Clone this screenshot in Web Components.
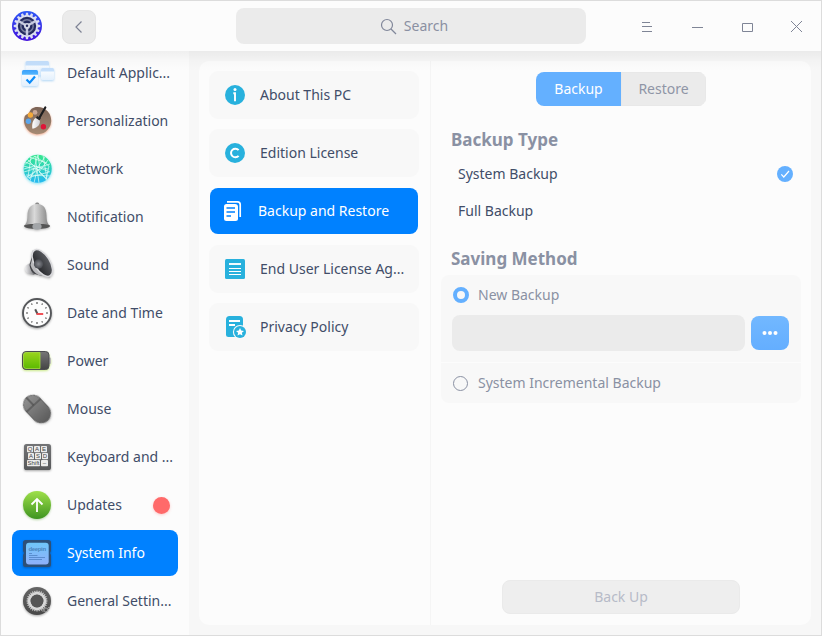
<!DOCTYPE html>
<html lang="en"><head><meta charset="utf-8"><title>Control Center</title>
<style>
html,body{margin:0;height:100%;background:#fcfcfc}
body{font:14px/20px "Noto Sans","Liberation Sans",sans-serif;color:#414d68;overflow:hidden}
</style></head><body>
<cc-window>
  <cc-titlebar slot="bar">Search</cc-titlebar>
  <cc-nav slot="nav">
    <cc-nav-item icon="apps">Default Applic...</cc-nav-item>
    <cc-nav-item icon="palette">Personalization</cc-nav-item>
    <cc-nav-item icon="network">Network</cc-nav-item>
    <cc-nav-item icon="bell">Notification</cc-nav-item>
    <cc-nav-item icon="sound">Sound</cc-nav-item>
    <cc-nav-item icon="clock">Date and Time</cc-nav-item>
    <cc-nav-item icon="power">Power</cc-nav-item>
    <cc-nav-item icon="mouse">Mouse</cc-nav-item>
    <cc-nav-item icon="keyboard">Keyboard and ...</cc-nav-item>
    <cc-nav-item icon="updates" badge>Updates</cc-nav-item>
    <cc-nav-item icon="system" active>System Info</cc-nav-item>
    <cc-nav-item icon="general">General Settin...</cc-nav-item>
  </cc-nav>
  <cc-list slot="list">
    <cc-list-item icon="info">About This PC</cc-list-item>
    <cc-list-item icon="edition">Edition License</cc-list-item>
    <cc-list-item icon="backup" active>Backup and Restore</cc-list-item>
    <cc-list-item icon="eula">End User License Ag...</cc-list-item>
    <cc-list-item icon="privacy">Privacy Policy</cc-list-item>
  </cc-list>
  <cc-backup slot="page">
    <cc-segmented slot="tabs"><span slot="on">Backup</span><span slot="off">Restore</span></cc-segmented>
    <cc-heading slot="type">Backup Type</cc-heading>
    <cc-choice slot="type" checked>System Backup</cc-choice>
    <cc-choice slot="type">Full Backup</cc-choice>
    <cc-heading slot="method">Saving Method</cc-heading>
    <cc-saving slot="method"><cc-radio slot="first" checked>New Backup</cc-radio><cc-radio slot="second">System Incremental Backup</cc-radio></cc-saving>
    <cc-button slot="action">Back Up</cc-button>
  </cc-backup>
</cc-window>
<script>
const polar=(cx,cy,r,a)=>[(cx+r*Math.cos(a)).toFixed(2),(cy+r*Math.sin(a)).toFixed(2)];
function gear(cx,cy,n,ro,ri){
  const p=[];
  for(let i=0;i<n;i++){const s=2*Math.PI/n,b=i*s-Math.PI/2;
    p.push(polar(cx,cy,ri,b-s*.32),polar(cx,cy,ro,b-s*.2),polar(cx,cy,ro,b+s*.2),polar(cx,cy,ri,b+s*.32));}
  return 'M'+p.map(q=>q.join(' ')).join('L')+'Z';
}
const ticks=Array.from({length:12},(_,i)=>`<path d="M18 7v${i%3?1.4:2}" transform="rotate(${i*30} 18 18)"/>`).join('');
const lg=(id,a,b,x2=0,y2=1)=>`<linearGradient id="${id}" x1="0" y1="0" x2="${x2}" y2="${y2}"><stop stop-color="${a}"/><stop offset="1" stop-color="${b}"/></linearGradient>`;
const key=(x,y,w,t)=>`<rect x="${x}" y="${y}" width="${w}" height="6.200" rx=".8" fill="#ececec"/><text x="${x+w/2}" y="${y+5.2}" font-size="6" text-anchor="middle" fill="#444" font-family="Liberation Sans,sans-serif">${t}</text>`;
const ICONS={
apps:`<defs>${lg('a','#3aa0fa','#52b6ff')}${lg('w','#ffffff','#e3f0fd')}</defs><g style="filter:drop-shadow(0 1px 1px #6ab4f066)">
<rect x="6.500" y="6" width="23.500" height="14.500" rx="1.500" fill="url(#w)"/><path d="M6.500 10.500V7.500Q6.500 6 8 6h20.500q1.500 0 1.500 1.500v3z" fill="#c4dffc"/></g><g style="filter:drop-shadow(0 1px 1px #6ab4f088)">
<rect x="22" y="13" width="13" height="12" rx="1.500" fill="url(#w)"/><path d="M22 16.500v-2q0-1.500 1.500-1.500h10q1.500 0 1.500 1.500v2z" fill="#c4dffc"/>
<rect x="3" y="15" width="16" height="16" rx="1.500" fill="url(#w)"/><path d="M3 19.700v-3.200Q3 15 4.500 15h13q1.500 0 1.500 1.500v3.200z" fill="url(#a)"/></g>
<path d="M7.500 24.500l3.200 3.200 5.300-6.200" fill="none" stroke="#0c8cf8" stroke-width="2.200"/>`,
palette:`<defs>${lg('a','#7c6457','#a58a74')}${lg('b','#ffffff','#cfcfd4',1,0)}</defs><path d="M18.500 4a13.600 13.600 0 1 1-13 10c1-3 4-2.500 5-5s3-5 8-5z" fill="url(#a)" style="filter:drop-shadow(0 1.500px 1.200px #e8784899)"/>
<circle cx="11.400" cy="12" r="2.700" fill="#f4a93a"/><circle cx="9.400" cy="18.300" r="2.700" fill="#5ba6ec"/><circle cx="16" cy="9.400" r="2.400" fill="#c9a898"/><circle cx="24.400" cy="23.700" r="2.700" fill="#dd1638"/>
<path d="M20 15.500L26.300 4.500" stroke="#1d1d1f" stroke-width="2.200" stroke-linecap="round"/><path d="M17.500 13.900l3.700 2.400" stroke="#26262a" stroke-width="2.400"/><path d="M16.600 14.900l4.300 2.800c.2 3.900-1.700 6.500-7.400 8-.8-4.400.2-8.800 3.100-10.800z" fill="url(#b)"/>`,
network:`<defs>${lg('a','#35e88c','#25b8f2')}<clipPath id="c"><circle cx="18.700" cy="17.800" r="14"/></clipPath></defs><circle cx="18.700" cy="17.800" r="14" fill="url(#a)" style="filter:drop-shadow(0 1px 1.500px #30cfe899)"/>
<g clip-path="url(#c)" fill="none" stroke="#e7fff9" stroke-width=".75" opacity=".9"><path d="M4 15L16 5l4 27M19 4l-8 26M6 11l25 10M5 21l26-8M16 5l14 10-3 14M8 27l22-6M8 8l20 20M26 6L10 28M19 4l2 14-15 9M12 6l-3 20M29 9l-9 12 8 8M5 18l10-3 14 3M24 4l4 24M7 24l25 1M18 19l-3 13M4 15l17 4M10 6l18 6"/></g>`,
bell:`<defs><linearGradient id="b"><stop stop-color="#8c8c8c"/><stop offset=".4" stop-color="#dadada"/><stop offset="1" stop-color="#7d7d7d"/></linearGradient></defs><g style="filter:drop-shadow(0 1px 1px #0004)"><rect x="16.200" y="3.500" width="4" height="4" rx="1.600" fill="#8b8b8b"/><path d="M18.200 5c-7 0-9.500 5-9.700 11-.2 5.500-.5 8-3.500 11 1 2.500 25 2.500 26 0-3-3-3.300-5.500-3.500-11C27.300 10 25.200 5 18.200 5z" fill="url(#b)"/><path d="M5 26.800c3-2.800 23-2.800 26 0 0 4.300-26 4.300-26 0z" fill="#555"/><ellipse cx="18" cy="27.500" rx="4.600" ry="3.200" fill="#a2a5a8"/></g>`,
sound:`<defs>${lg('a','#ececee','#77777b',1,0)}${lg('b','#26272a','#5b5d62',1,0)}<radialGradient id="r"><stop stop-color="#86888e"/><stop offset="1" stop-color="#484a50"/></radialGradient></defs><g style="filter:drop-shadow(0 1px 1px #0004)"><path d="M8.500 17.500c-3.500 2-3 8 1 9.500l6 1L13 15z" fill="url(#a)"/><path d="M13 9L10.500 18q1 7 5 9l8 2z" fill="#45464a"/><path d="M13 3L13.500 9q-1 6-2 9 2 7 8 10l12 3z" fill="#b9b9bc"/><ellipse cx="23.300" cy="16" rx="7.600" ry="15" transform="rotate(-32 23.300 16)" fill="url(#b)" stroke="#d9d9dc" stroke-width="1.500"/><circle cx="19.500" cy="17" r="4.700" fill="url(#r)"/></g>`,
clock:`<circle cx="18" cy="18" r="14" fill="#fdfdfd" stroke="#55575a" stroke-width="1.900" style="filter:drop-shadow(0 1px 1px #0005)"/><g stroke="#444" stroke-width="1.100">${ticks}</g><path d="M18.500 19l-2.300-4.800" stroke="#555" stroke-width="2"/><path d="M17.500 19h6.700" stroke="#f0494f" stroke-width="1.900"/>`,
power:`<defs>${lg('a','#9ad41c','#5cba00')}${lg('b','#777','#444')}</defs><g style="filter:drop-shadow(0 1px 1.200px #8fd40077)"><rect x="29" y="14.500" width="3" height="6.500" rx="1" fill="#b9b9b9"/><rect x="3.500" y="8.500" width="26.500" height="18" rx="3.600" fill="url(#b)" stroke="#4c4d50"/><path d="M21 9.500H7Q4.500 9.500 4.500 12v11q0 2.500 2.500 2.500h14z" fill="url(#a)" stroke="#a6e03c" stroke-width=".8"/></g>`,
mouse:`<defs>${lg('a','#8f8f8f','#5c5c5c')}</defs><g transform="rotate(-43 18 18)" style="filter:drop-shadow(0 1px 1px #0004)"><rect x="8.500" y="2.500" width="19" height="31" rx="9.500" fill="url(#a)" stroke="#555" stroke-width=".8"/><path d="M8.500 13h19M18 2.500V13" stroke="#464646" stroke-width="1.100"/></g>`,
keyboard:`<defs>${lg('a','#737476','#57585a')}</defs><rect x="5" y="5" width="27" height="26" rx="2.600" fill="url(#a)" style="filter:drop-shadow(0 1px 1px #0005)"/>${key(8,7,6,'Q')}${key(15,7,6,'A')}${key(22,7,6,'E')}${key(9,14,6,'A')}${key(16,14,6,'S')}${key(23,14,6,'D')}${key(8,21,13,'Shift')}${key(22,21,7,'–')}`,
updates:`<defs>${lg('a','#9fe04a','#3e9420')}</defs><circle cx="18" cy="18" r="14" fill="url(#a)" style="filter:drop-shadow(0 1px 1px #52a02a66)"/><path d="M18 25V12M12.500 17.500L18 12l5.500 5.500" stroke="#fff" stroke-width="1.800" fill="none"/>`,
system:`<defs>${lg('a','#6fc6f8','#8fb0fb')}</defs><path d="M6.500 5h23Q32 5 32 7.500V16l-1 2 1 2v9.500q0 2.500-2.500 2.500h-23Q4 32 4 29.500V20l1-2-1-2V7.500Q4 5 6.500 5z" fill="#2d5078" style="filter:drop-shadow(0 1px 1px #0004)"/><rect x="7" y="7.700" width="22.700" height="21.800" rx="3" fill="url(#a)"/><text x="18.300" y="15.500" font-size="6" font-weight="bold" textLength="17.500" text-anchor="middle" fill="#4a86bd" font-family="Liberation Sans,sans-serif">deepin</text><path d="M10 18.500h3M10 20.500h8.500M10 22.500h16M10 24.500h13" stroke="#4f83c4" stroke-width=".8"/>`,
general:`<defs>${lg('a','#666','#484848')}</defs><circle cx="18" cy="18" r="14" fill="url(#a)" style="filter:drop-shadow(0 1px 1px #0005)"/><path d="${gear(18,18,28,10.500,9)}M24.400 18a6.400 6.400 0 1 0-12.800 0 6.400 6.400 0 1 0 12.800 0z" fill="#d8d8d8" fill-rule="evenodd"/><circle cx="18" cy="18" r="6.300" fill="#555"/><g fill="none" stroke="#aaa" stroke-width=".8"><circle cx="27" cy="27" r="2"/><path d="M24 29v-3m5-2l2 2"/></g>`,
logo:`<defs>${lg('a','#2d58f5','#4411dc')}</defs><circle cx="18" cy="18" r="15" fill="url(#a)"/><path d="${gear(18,18,16,13.300,11)}" fill="#dcdff0"/><circle cx="18" cy="18" r="9.200" fill="#252b60"/><circle cx="18" cy="18" r="6.200" fill="none" stroke="#777d9d" stroke-width="1.500"/><path d="M18 18v10M18 18l-8.500-5M18 18l8.500-5" stroke="#c6cbe0" stroke-width="2.500"/><circle cx="18" cy="18" r="3" fill="#d6d9e8"/><circle cx="18" cy="17.800" r="1.200" fill="#252b60"/>`,
info:`<circle cx="12" cy="12" r="10" fill="#28b1dd"/><circle cx="12" cy="6.600" r="1.500" fill="#fff"/><path d="M10.300 10.300H12v8" stroke="#fff" stroke-width="1.900" fill="none"/>`,
edition:`<circle cx="12" cy="12" r="10" fill="#28b1dd"/><path d="M15.600 9.200a4.300 4.300 0 1 0 0 5.600" stroke="#fff" stroke-width="2" fill="none"/>`,
backup:`<path d="M5 2.800h10.500q2.700 0 2.700 2.700V18" fill="none" stroke="#fff" stroke-width="1.700"/><path d="M4.500 5H13q3 0 3 3v11.500q0 2.500-2.500 2.500h-9Q2 22 2 19.500v-12Q2 5 4.500 5z" fill="#fff"/><path d="M4.500 9H13M4.500 13H13M4.500 17H9" stroke="#0081ff" stroke-width="1.600"/>`,
eula:`<rect x="2" y="2" width="20" height="20" rx="1.500" fill="#28b1dd"/><path d="M6 7h12" stroke="#fff" stroke-width="1.900"/><path d="M6 11.500h12M6 14.500h12M6 17.500h12" stroke="#fff"/>`,
privacy:`<path d="M6.500 1h10Q20 1 20 4.500v15q0 2.500-2.500 2.500h-12Q3 22 3 19.500v-15Q3 1 6.500 1z" fill="#28b1dd"/><path d="M6 6h11M6 10h6" stroke="#fff" stroke-width="1.900"/><circle cx="17" cy="17" r="7.100" fill="#f8f8f8"/><circle cx="17" cy="17" r="6" fill="#28b1dd"/><path d="M17 13l1.200 2.600 2.800.3-2.100 1.900.6 2.800-2.500-1.400-2.500 1.400.6-2.800-2.100-1.900 2.800-.3z" fill="#fff"/>`
};
const define=(tag,html,setup)=>customElements.define(tag,class extends HTMLElement{
  connectedCallback(){
    if(this.shadowRoot)return;
    const t=document.createElement('template');t.innerHTML=html;
    this.attachShadow({mode:'open'}).append(t.content.cloneNode(true));
    if(setup)setup(this,this.shadowRoot);
  }
});
define('cc-icon','<style>:host{display:block;flex:none}svg{display:block;overflow:visible}</style><div></div>',(h,r)=>{
  const s=h.getAttribute('size')||36;
  r.querySelector('div').innerHTML=`<svg width="${s}" height="${s}" viewBox="0 0 ${s} ${s}">${ICONS[h.getAttribute('name')]}</svg>`;
});
const setIcon=(h,r)=>{const i=document.createElement('cc-icon');i.setAttribute('name',h.getAttribute('icon'));
  if(h.localName==='cc-list-item')i.setAttribute('size','24');r.querySelector('.i').append(i);};
define('cc-window',`<style>:host{display:flex;flex-direction:column;box-sizing:border-box;width:822px;height:636px;border:1px solid #dcdcdc;background:#fcfcfc;overflow:hidden}
.body{flex:1;display:grid;grid-template-columns:188px 1fr;min-height:0;position:relative}
.body::after{content:"";position:absolute;inset:0 0 auto;height:20px;background:linear-gradient(#0000000d,#00000004 50%,#0000);pointer-events:none}
.nav{overflow:hidden;min-height:0}.content{background:#f7f7f7;padding:10px 10px;display:grid}
.panel{background:#fcfcfc;border-radius:10px;display:grid;grid-template-columns:232px 1fr}
.list{border-right:1px solid #f5f5f5;padding:11px 12px 0 11px}</style>
<slot name="bar"></slot><div class="body"><div class="nav"><slot name="nav"></slot></div><div class="content"><div class="panel"><div class="list"><slot name="list"></slot></div><slot name="page"></slot></div></div></div>`);
define('cc-titlebar',`<style>:host{display:flex;flex:none;height:50px;align-items:center;padding-left:8px}
.back{flex:none;width:34px;height:34px;box-sizing:border-box;border:1px solid #e5e5e5;border-radius:8px;background:#ebebeb;margin:2px 140px 0 17px;display:grid;place-items:center}
.search{flex:none;box-sizing:border-box;width:350px;height:36px;padding-left:6px;border-radius:8px;background:#ebebeb;display:flex;align-items:center;justify-content:center;gap:7px;color:#8a90a2}
.ctl{flex:none;display:flex;margin-left:36px}svg{display:block}</style>
<cc-icon name="logo"></cc-icon><div class="back"><svg width="12" height="14" viewBox="0 0 12 14"><path d="M8.500 1.500L3 7l5.500 5.500" fill="none" stroke="#7d8294" stroke-width="1.200"/></svg></div>
<div class="search"><svg width="17" height="17" viewBox="0 0 17 17" fill="none" stroke="#81879a" stroke-width="1.200"><circle cx="7" cy="7" r="5.500"/><path d="M11 11l5 5"/></svg><slot></slot></div>
<div class="ctl"><svg width="199" height="50" fill="none" stroke="#7f8596"><path d="M20 21.500h8M20 25.500h10M20 30.500h10M70 26.500h11M120.500 22.500h10v8h-10zM169 20l11 11M180 20l-11 11"/></svg></div>`);
define('cc-nav',`<style>:host{display:flex;flex-direction:column;gap:2px;padding:0 11px;margin-top:-1px}</style><slot></slot>`);
define('cc-nav-item',`<style>:host{display:flex;height:46px;box-sizing:border-box;align-items:center;gap:12px;padding:0 0 0 7px;border-radius:8px;white-space:nowrap}
:host([active]){background:#0081ff;color:#fff}.t{flex:1}.b{display:none}:host([badge]) .b{display:block;width:17px;height:17px;margin-right:8.500px;border-radius:50%;background:#ff6a6a;box-shadow:0 1px 3px #ff6a6a55}</style><div class="i"></div><div class="t"><slot></slot></div><div class="b"></div>`,setIcon);
define('cc-list',`<style>:host{display:flex;flex-direction:column;gap:12px}</style><slot></slot>`);
define('cc-list-item',`<style>:host{display:flex;height:46px;align-items:center;gap:13px;padding-left:13px;border-radius:8px;background:#f8f8f8;box-shadow:0 0 0 1px #f8f8f8;white-space:nowrap}
:host([active]){background:#0081ff;color:#fff;box-shadow:none;padding-left:12px;gap:12px}</style><div class="i"></div><div><slot></slot></div>`,setIcon);
define('cc-backup',`<style>:host{display:flex;flex-direction:column;padding:11px 10px 11px}.tabs{display:flex;justify-content:center;height:34px}
.type{margin-top:17px}.method{margin-top:13px}.action{margin-top:auto;display:flex;justify-content:center}</style>
<div class="tabs"><slot name="tabs"></slot></div><div class="type"><slot name="type"></slot></div><div class="method"><slot name="method"></slot></div><div class="action"><slot name="action"></slot></div>`);
define('cc-segmented',`<style>:host{display:grid;grid-template-columns:85px 85px;border-radius:8px;overflow:hidden;line-height:34px;text-align:center}
.a{background:#64b0ff;color:#fff}.b{background:#ebebeb;color:#8f95a6;box-shadow:inset 0 0 0 1px #e8e8e8}</style><div class="a"><slot name="on"></slot></div><div class="b"><slot name="off"></slot></div>`);
define('cc-heading',`<style>:host{display:block;padding-left:10px;height:32px;font-weight:700;font-size:17px;line-height:34px;color:#8a91a3}</style><slot></slot>`);
define('cc-choice',`<style>:host{display:flex;height:37px;align-items:center;justify-content:space-between;padding:0 8px 0 17px}svg{display:none}:host([checked]) svg{display:block}</style><slot></slot><svg width="16" height="16"><circle cx="8" cy="8" r="8" fill="#64b0ff"/><path d="M4.300 8.300l2.500 2.700 5.200-6" fill="none" stroke="#fff" stroke-width="1.200"/></svg>`);
define('cc-radio',`<style>:host{display:flex;align-items:center;gap:9px;height:40px;padding-left:12px;color:#8a91a3}i{box-sizing:border-box;width:15px;height:15px;border:1px solid #8a91a3;border-radius:50%;margin-right:1px}
:host([checked]) i{width:16px;height:16px;border:4px solid #64b0ff;margin:0}</style><i></i><span><slot></slot></span>`);
define('cc-saving',`<style>:host{display:grid;grid-template-rows:87px 40px;gap:1px;margin-top:1px}.a{background:#f8f8f8;border-radius:8px 8px 0 0}.b{background:#f8f8f8;border-radius:0 0 8px 8px}
.r{display:flex;align-items:center;gap:6px;padding:0 12px 0 11px}.in{flex:1;height:36px;border-radius:8px;background:#ebebeb}.m{width:38px;height:34px;border-radius:8px;background:linear-gradient(#72b8ff,#64aeff);display:grid;place-items:center}</style>
<div class="a"><slot name="first"></slot><div class="r"><div class="in"></div><div class="m"><svg width="16" height="4" fill="#fff"><circle cx="2.500" cy="2" r="2"/><circle cx="8" cy="2" r="2"/><circle cx="13.500" cy="2" r="2"/></svg></div></div></div><div class="b"><slot name="second"></slot></div>`);
define('cc-button',`<style>:host{display:block;box-sizing:border-box;width:238px;height:34px;line-height:32px;text-align:center;border:1px solid #eaeaea;border-radius:8px;background:#eee;color:#b7bbc8}</style><slot></slot>`);
</script></body></html>
